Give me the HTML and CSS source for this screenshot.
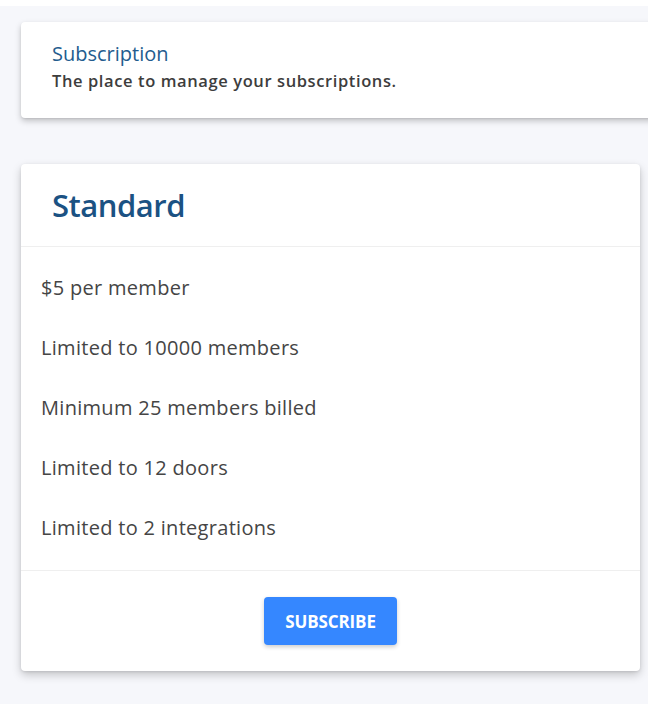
FILE: index.html
```html
<!DOCTYPE html>
<html lang="en">
<head>
<meta charset="utf-8">
<title>Subscription</title>
<link rel="stylesheet" href="styles.css">
</head>
<body>
<div class="page">
  <div class="intro-card">
    <h1 class="intro-title">Subscription</h1>
    <p class="intro-sub">The place to manage your subscriptions.</p>
  </div>
  <div class="plan-card">
    <div class="plan-head">
      <h2 class="plan-name">Standard</h2>
    </div>
    <ul class="plan-list">
      <li>$5 per member</li>
      <li>Limited to 10000 members</li>
      <li>Minimum 25 members billed</li>
      <li>Limited to 12 doors</li>
      <li>Limited to 2 integrations</li>
    </ul>
    <div class="plan-foot">
      <button class="btn">SUBSCRIBE</button>
    </div>
  </div>
</div>
</body>
</html>
```

FILE: styles.css
```css
* { box-sizing: border-box; }
html, body { margin: 0; padding: 0; background: #ffffff; }
body { font-family: "Open Sans", "Noto Sans", sans-serif; }

.page {
  margin-top: 6px;
  width: 648px;
  min-height: 698px;
  background: #f6f7fb;
  padding: 16px 0 0 21px;
  overflow: hidden;
}

.intro-card {
  width: 660px;
  height: 96px;
  background: #fff;
  border-radius: 4px 0 0 4px;
  box-shadow: 0 3px 6px rgba(0,0,0,0.22), 0 1px 2px rgba(0,0,0,0.08);
  padding: 18px 31px 0;
}
.intro-title {
  margin: 0;
  font-size: 20px;
  font-weight: 500;
  line-height: 27px;
  color: #235c8e;
}
.intro-sub {
  margin: 0;
  font-size: 16.5px;
  font-weight: 600;
  line-height: 27px;
  letter-spacing: 0.6px;
  color: #3d3d3d;
}

.plan-card {
  margin-top: 46px;
  width: 619px;
  background: #fff;
  border-radius: 4px;
  box-shadow: 0 4px 10px rgba(0,0,0,0.2), 0 1px 3px rgba(0,0,0,0.1);
}
.plan-head {
  height: 83px;
  border-bottom: 1px solid #efefef;
  display: flex;
  align-items: center;
  padding: 0 31px;
}
.plan-name {
  margin: 0;
  font-size: 31px;
  font-weight: 600;
  letter-spacing: -0.5px;
  color: #1b5283;
  line-height: 40px;
}
.plan-list {
  list-style: none;
  margin: 0;
  padding: 10px 20px 13px;
  border-bottom: 1px solid #efefef;
}
.plan-list li {
  height: 60px;
  display: flex;
  align-items: center;
  font-size: 20px;
  color: #454545;
  letter-spacing: 0.3px;
}
.plan-foot {
  display: flex;
  justify-content: center;
  padding: 26px 0;
}
.btn {
  width: 133px;
  height: 48px;
  border: none;
  border-radius: 4px;
  background: #3587ff;
  color: #fff;
  font-family: "Open Sans", sans-serif;
  font-weight: 700;
  font-size: 17px;
  letter-spacing: -0.1px;
  box-shadow: 0 2px 4px rgba(0,0,0,0.2);
  cursor: pointer;
}
```
